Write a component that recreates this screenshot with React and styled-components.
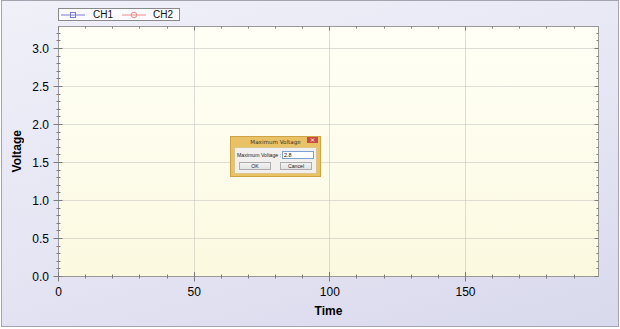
import React from "react";
import styled, { createGlobalStyle } from "styled-components";

const GlobalStyle = createGlobalStyle`
  html, body { margin: 0; padding: 0; background: #ffffff; }
  body { font-family: "Liberation Sans", Arial, sans-serif; color: #000; }
`;

const Frame = styled.div`
  position: relative;
  box-sizing: border-box;
  width: 618px;
  height: 327px;
  margin-left: 1px;
  border: 1px solid #a4a4b0;
  background: linear-gradient(165deg, #f0f0f9 0%, #e6e6f4 50%, #d9d9ed 100%);
  display: grid;
  grid-template-columns: 56px 541px 1fr;
  grid-template-rows: 25px 251px 1fr;
`;

const Legend = styled.div`
  grid-column: 2;
  grid-row: 1;
  align-self: start;
  justify-self: start;
  margin-top: 7px;
  box-sizing: border-box;
  height: 13px;
  display: flex;
  align-items: center;
  padding: 0 6px 0 2px;
  border: 1px solid #8a8a8a;
  background: #fbfbfd;
`;

const LegendText = styled.span`
  font-size: 10px;
  line-height: 11px;
  color: #111;
  margin: ${(p) => p.$margin};
`;

const LegendMark = ({ color, shape }) => (
  <svg width="24" height="8" viewBox="0 0 24 8" style={{ display: "block", flex: "none" }}>
    <line x1="0" y1="4" x2="24" y2="4" stroke={color} strokeWidth="1" />
    {shape === "square" ? (
      <rect x="9.5" y="1.5" width="5" height="5" fill="none" stroke={color} strokeWidth="1" />
    ) : (
      <circle cx="12" cy="4" r="2.8" fill="none" stroke={color} strokeWidth="1" />
    )}
  </svg>
);

const YAxis = styled.div`
  grid-column: 1;
  grid-row: 2;
  display: flex;
  justify-content: space-between;
`;

const YTitle = styled.div`
  writing-mode: vertical-rl;
  transform: rotate(180deg);
  align-self: center;
  margin-left: 8px;
  font-size: 12px;
  font-weight: bold;
  line-height: 14px;
`;

const YTickList = styled.div`
  display: flex;
  flex-direction: column;
  padding-top: 3.5px;
  margin-right: 9px;
`;

const YTick = styled.div`
  height: 38px;
  line-height: 38px;
  font-size: 12px;
  text-align: right;
`;

const PlotArea = styled.div`
  grid-column: 2;
  grid-row: 2;
  background: linear-gradient(180deg, #fffff6 0%, #fdfcea 60%, #fbf9de 100%);
`;

const PlotSvg = styled.svg`
  display: block;
  overflow: visible;
`;

const XAxis = styled.div`
  grid-column: 2;
  grid-row: 3;
  display: flex;
  flex-direction: column;
`;

const XTickRow = styled.div`
  display: flex;
  margin-left: -67.33px;
  margin-top: 8px;
`;

const XTick = styled.div`
  flex: none;
  width: 135.67px;
  text-align: center;
  font-size: 12px;
  line-height: 14px;
`;

const XTitle = styled.div`
  margin-top: 5px;
  text-align: center;
  font-size: 12px;
  font-weight: bold;
  line-height: 14px;
`;

const Dialog = styled.div`
  position: absolute;
  left: 228px;
  top: 135px;
  box-sizing: border-box;
  width: 91px;
  height: 41px;
  border: 1px solid #cfa244;
  background: #e9c266;
  display: flex;
  flex-direction: column;
`;

const TitleBar = styled.div`
  height: 10px;
  display: grid;
  grid-template-columns: 13px 1fr 13px;
  align-items: start;
`;

const TitleText = styled.div`
  grid-column: 2;
  text-align: center;
  font-family: "DejaVu Sans", "Liberation Sans", sans-serif;
  font-size: 5.6px;
  line-height: 10px;
  color: #3d3526;
`;

const CloseButton = styled.div`
  grid-column: 3;
  width: 11px;
  height: 6px;
  background: #c94c42;
  display: flex;
  align-items: center;
  justify-content: center;
`;

const Client = styled.div`
  margin: 0 3px 2px 3px;
  flex: 1;
  background: #f1f0ee;
  border: 1px solid #dcc48a;
  box-sizing: border-box;
  display: flex;
  flex-direction: column;
  padding: 3px 2px 0 2px;
  gap: 3px;
`;

const FieldRow = styled.div`
  display: flex;
  align-items: center;
  justify-content: space-between;
  height: 8px;
`;

const FieldLabel = styled.span`
  font-size: 5.2px;
  color: #222;
  white-space: nowrap;
`;

const FieldInput = styled.div`
  box-sizing: border-box;
  width: 32px;
  height: 8px;
  border: 1px solid #7aa0d4;
  background: #fff;
  font-size: 5.5px;
  line-height: 6px;
  padding-left: 1px;
  color: #111;
`;

const ButtonRow = styled.div`
  display: flex;
  justify-content: space-between;
  padding: 0 2px 0 2px;
`;

const DlgButton = styled.div`
  box-sizing: border-box;
  width: 32px;
  height: 8px;
  border: 1px solid #adadad;
  background: linear-gradient(180deg, #f2f2f2, #e3e3e3);
  font-size: 5.2px;
  line-height: 6px;
  text-align: center;
  color: #222;
`;

const XS = 2.7133;
const YS = 76;
const px = (v) => 0.5 + v * XS;
const py = (v) => 250.5 - v * YS;

function PlotDrawing() {
  const xMinor = [];
  for (let v = 0; v < 200; v += 10) xMinor.push(v);
  const yMinor = [];
  for (let i = 0; i <= 32; i++) yMinor.push(i / 10);
  const tick = "#7c7c7c";
  const grid = "#bdbdbd";
  return (
    <PlotSvg width="541" height="251" viewBox="0 0 541 251">
      {[50, 100, 150].map((v) => {
        const x = Math.round(px(v) - 0.5) + 0.5;
        return (
          <line key={"gx" + v} x1={x} y1="0.5" x2={x} y2="250.5" stroke={grid} strokeWidth="1" strokeDasharray="1 1" />
        );
      })}
      {[0.5, 1, 1.5, 2, 2.5, 3].map((v) => {
        const y = Math.round(py(v) - 0.5) + 0.5;
        return (
          <line key={"gy" + v} x1="0.5" y1={y} x2="540.5" y2={y} stroke={grid} strokeWidth="1" strokeDasharray="1 1" />
        );
      })}
      <rect x="0.5" y="0.5" width="540" height="250" fill="none" stroke="#9a9a9a" strokeWidth="1" />
      {xMinor.map((v) => {
        const major = v % 50 === 0;
        const x = Math.round(px(v) - 0.5) + 0.5;
        return (
          <g key={"tx" + v}>
            <line x1={x} y1={major ? 246 : 248.5} x2={x} y2={major ? 255.5 : 252.5} stroke={tick} />
            <line x1={x} y1="0.5" x2={x} y2={major ? 4.5 : 2.5} stroke={tick} />
          </g>
        );
      })}
      {yMinor.map((v, i) => {
        const major = i % 5 === 0;
        const y = Math.round(py(v) - 0.5) + 0.5;
        return (
          <g key={"ty" + i}>
            <line x1={major ? -4.5 : -1.5} y1={y} x2={major ? 4.5 : 2.5} y2={y} stroke={tick} />
            <line x1={major ? 536.5 : 538.5} y1={y} x2="540.5" y2={y} stroke={tick} />
          </g>
        );
      })}
    </PlotSvg>
  );
}

export default function App() {
  const yLabels = ["3.0", "2.5", "2.0", "1.5", "1.0", "0.5", "0.0"];
  const xLabels = ["0", "50", "100", "150"];
  return (
    <>
      <GlobalStyle />
      <Frame>
        <Legend>
          <LegendMark color="#7c7cd6" shape="square" />
          <LegendText $margin="0 9px 0 8px">CH1</LegendText>
          <LegendMark color="#f08a8a" shape="circle" />
          <LegendText $margin="0 0 0 7px">CH2</LegendText>
        </Legend>

        <YAxis>
          <YTitle>Voltage</YTitle>
          <YTickList>
            {yLabels.map((l) => (
              <YTick key={l}>{l}</YTick>
            ))}
          </YTickList>
        </YAxis>

        <PlotArea>
          <PlotDrawing />
        </PlotArea>

        <XAxis>
          <XTickRow>
            {xLabels.map((l) => (
              <XTick key={l}>{l}</XTick>
            ))}
          </XTickRow>
          <XTitle>Time</XTitle>
        </XAxis>

        <Dialog>
          <TitleBar>
            <TitleText>Maximum Voltage</TitleText>
            <CloseButton>
              <svg width="5" height="4" viewBox="0 0 5 4">
                <path d="M1 0.5 L4 3.5 M4 0.5 L1 3.5" stroke="#fff" strokeWidth="0.9" />
              </svg>
            </CloseButton>
          </TitleBar>
          <Client>
            <FieldRow>
              <FieldLabel>Maximum Voltage :</FieldLabel>
              <FieldInput>2.8</FieldInput>
            </FieldRow>
            <ButtonRow>
              <DlgButton>OK</DlgButton>
              <DlgButton>Cancel</DlgButton>
            </ButtonRow>
          </Client>
        </Dialog>
      </Frame>
    </>
  );
}
